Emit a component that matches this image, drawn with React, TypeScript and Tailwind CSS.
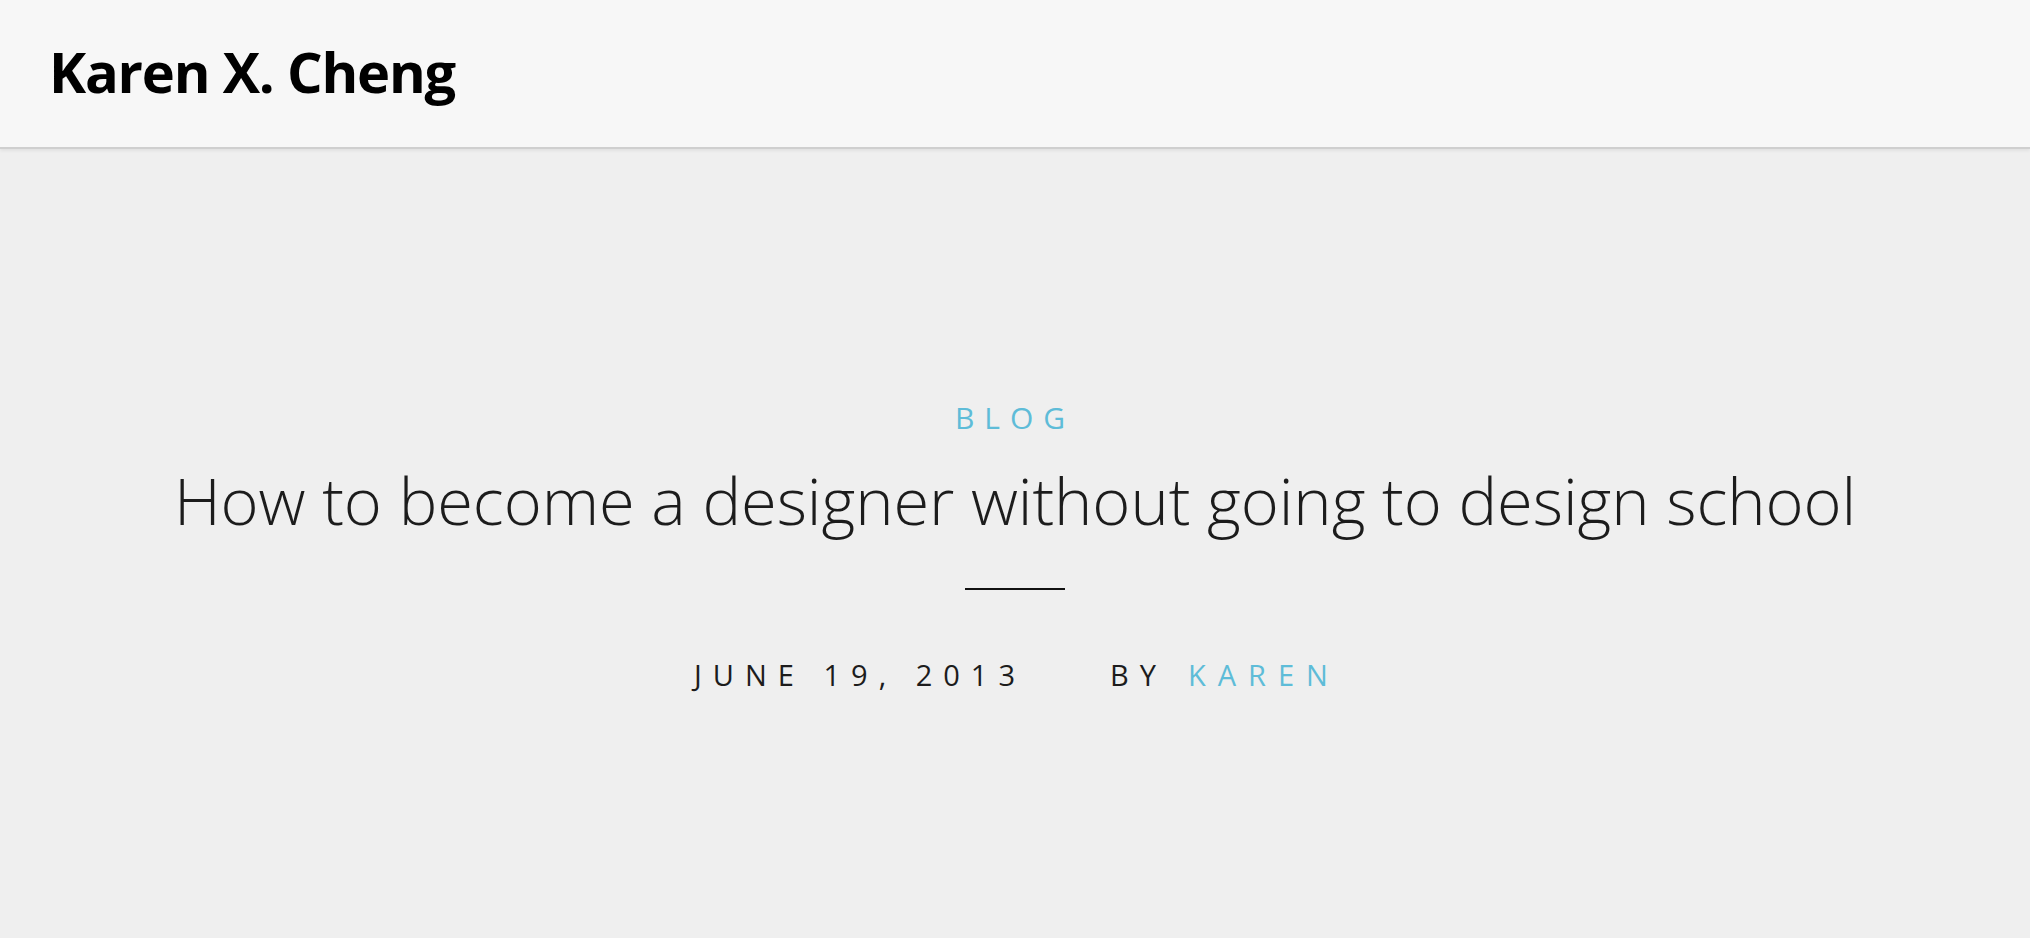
import React from 'react';

const sans = { fontFamily: '"Open Sans", "Liberation Sans", sans-serif' };

export default function App() {
  return (
    <div className="min-h-[938px] bg-[#efefef] text-[#1c1c1c]" style={sans}>
      <header className="h-[149px] bg-[#f7f7f7] border-b-2 border-[#cfcfcf] shadow-[0_2px_3px_rgba(0,0,0,0.06)] pl-[49px] pt-[43px]">
        <h1 className="text-[56px] leading-none font-bold text-black tracking-[-1.2px]">Karen X. Cheng</h1>
      </header>

      <main className="flex flex-col items-center pt-[254px]">
        <div className="text-[30px] leading-none text-[#5ebcd8] tracking-[10px]">BLOG</div>
        <h2 className="mt-[35px] text-[65px] leading-none font-light text-[#1c1c1c] tracking-[-0.1px]">
          How to become a designer without going to design school
        </h2>
        <div className="mt-[55px] w-[100px] h-[2px] bg-[#111]" />
        <div className="mt-[70px] flex items-baseline text-[29px] leading-none tracking-[11px] pl-[4px]">
          <span>JUNE 19, 2013</span>
          <span className="ml-[84px]">BY</span>
          <span className="ml-[21px] text-[#5ebcd8] tracking-[12px]">KAREN</span>
        </div>
      </main>
    </div>
  );
}
